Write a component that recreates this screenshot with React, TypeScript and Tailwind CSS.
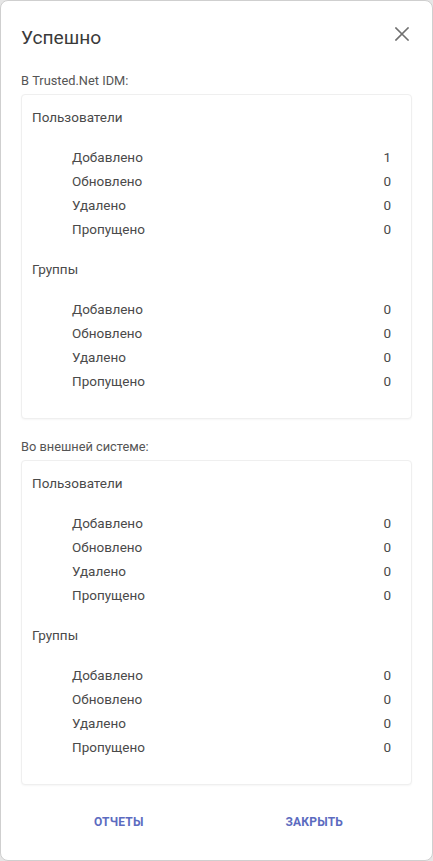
import React from 'react';

type Stat = { label: string; value: number };

const rows = (vals: number[]): Stat[] => [
  { label: 'Добавлено', value: vals[0] },
  { label: 'Обновлено', value: vals[1] },
  { label: 'Удалено', value: vals[2] },
  { label: 'Пропущено', value: vals[3] },
];

const Group: React.FC<{ title: string; stats: Stat[]; first?: boolean }> = ({ title, stats, first }) => (
  <div className={first ? '' : 'mt-[18px]'}>
    <div className="h-5 leading-5 text-[13.5px] text-[#4a4a4a]">{title}</div>
    <div className="mt-[18px] pl-10">
      {stats.map((s) => (
        <div key={s.label} className="flex h-6 items-center justify-between text-[13.5px] text-[#4a4a4a]">
          <span>{s.label}</span>
          <span>{s.value}</span>
        </div>
      ))}
    </div>
  </div>
);

const Card: React.FC<{ users: number[]; groups: number[] }> = ({ users, groups }) => (
  <div className="rounded border border-[#efefef] bg-white pt-3 pb-[25px] pl-[10px] pr-5 shadow-[0_1px_2px_rgba(0,0,0,0.04)]">
    <Group title="Пользователи" stats={rows(users)} first />
    <Group title="Группы" stats={rows(groups)} />
  </div>
);

export default function App() {
  return (
    <div className="h-[861px] w-[433px] bg-[#e6e6e6]" style={{ fontFamily: 'Roboto, "Noto Sans", sans-serif' }}>
      <div className="flex h-full flex-col rounded-lg border border-[#cfcfcf] bg-white px-5">
        <div className="mt-[23px] flex h-7 items-center justify-between">
          <h1 className="text-[19.2px] leading-7 text-[#3a3a3a]">Успешно</h1>
          <svg className="mr-[3px] -mt-2" width="14" height="14" viewBox="0 0 14 14" fill="none" stroke="#707070" strokeWidth="1.6" strokeLinecap="square">
            <path d="M1 1L13 13M13 1L1 13" />
          </svg>
        </div>
        <div className="mt-[19px] h-5 leading-5 text-[12.8px] text-[#555]">В Trusted.Net IDM:</div>
        <div className="mt-[3px]">
          <Card users={[1, 0, 0, 0]} groups={[0, 0, 0, 0]} />
        </div>
        <div className="mt-[18px] h-5 leading-5 text-[12.8px] text-[#555]">Во внешней системе:</div>
        <div className="mt-[3px]">
          <Card users={[0, 0, 0, 0]} groups={[0, 0, 0, 0]} />
        </div>
        <div className="mt-[28px] flex">
          <button className="flex h-[18px] w-1/2 items-center justify-center text-[12px] font-bold tracking-[0.2px] text-[#5c6bc0]">ОТЧЕТЫ</button>
          <button className="flex h-[18px] w-1/2 items-center justify-center text-[12px] font-bold tracking-[0.2px] text-[#5c6bc0]">ЗАКРЫТЬ</button>
        </div>
      </div>
    </div>
  );
}
